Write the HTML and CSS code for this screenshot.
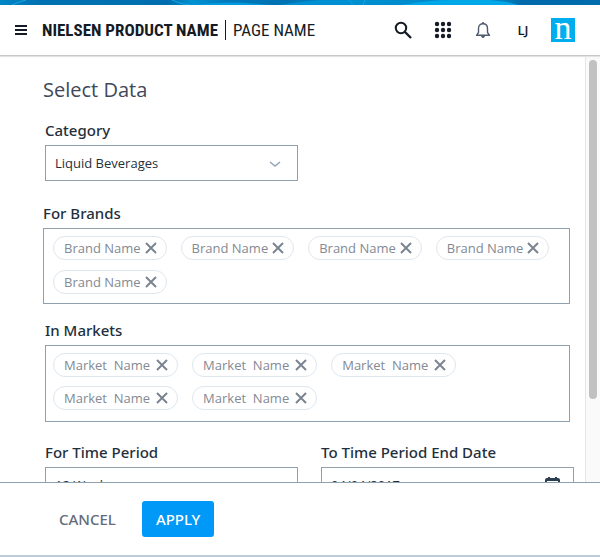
FILE: index.html
```html
<!DOCTYPE html>
<html lang="en">
<head>
<meta charset="utf-8">
<meta name="viewport" content="width=device-width, initial-scale=1">
<title>Nielsen Product Name | Page Name</title>
<link rel="stylesheet" href="styles.css">
</head>
<body>
<svg class="symbols" aria-hidden="true">
  <symbol id="close" viewBox="0 0 12 12"><path d="M1 1 11 11M11 1 1 11" fill="none" stroke="currentColor" stroke-width="2"/></symbol>
</svg>

<svg class="banner" viewBox="0 0 600 5" preserveAspectRatio="none" aria-hidden="true">
  <defs>
    <linearGradient id="wave">
      <stop offset="0" stop-color="#0087c6"/><stop offset=".06" stop-color="#0072b2"/>
      <stop offset=".28" stop-color="#006eae"/><stop offset=".32" stop-color="#0092d2"/>
      <stop offset=".38" stop-color="#0078ba"/><stop offset=".48" stop-color="#0072b2"/>
      <stop offset=".58" stop-color="#0090d0"/><stop offset=".68" stop-color="#008ccc"/>
      <stop offset=".84" stop-color="#0080c2"/><stop offset=".87" stop-color="#0069aa"/>
      <stop offset="1" stop-color="#006cac"/>
    </linearGradient>
  </defs>
  <path fill="url(#wave)" d="M0 0h600v5H0z"/>
  <path fill="#009bdc" d="M190 5Q230 0 268 5zM345 0h5l4 5h-3z"/>
  <path fill="#0090d2" d="M280 5Q310 0 330 0H348L352 5z"/>
  <path fill="#00a8e8" d="M402 5Q430 0 450 0H490Q510 2 518 5z"/>
  <path fill="none" stroke="#1aa5e0" d="M12 5Q18 2 26 0M172 0Q180 4 190 5M365 0 363 5"/>
</svg>

<header class="topbar">
  <button class="icon-button" type="button" aria-label="Menu">
    <svg width="12" height="12" viewBox="0 0 12 12"><path fill="#151b25" d="M0 1h12v2H0zM0 5h12v2H0zM0 9h12v2H0z"/></svg>
  </button>
  <h1 class="brand"><strong>NIELSEN PRODUCT NAME</strong><span class="divider"></span><span class="page">PAGE NAME</span></h1>
  <nav class="tools" aria-label="Tools">
    <button class="icon-button" type="button" aria-label="Search">
      <svg width="18" height="18" viewBox="0 0 18 18"><g fill="none" stroke="#151b25" stroke-width="2"><circle cx="7" cy="7" r="5.2"/><path d="m11 11 6 6" stroke-width="2.4"/></g></svg>
    </button>
    <button class="icon-button" type="button" aria-label="Apps">
      <svg width="18" height="18" viewBox="0 0 18 18"><g fill="#151b25"><circle cx="3" cy="3" r="2.2"/><circle cx="9" cy="3" r="2.2"/><circle cx="15" cy="3" r="2.2"/><circle cx="3" cy="9" r="2.2"/><circle cx="9" cy="9" r="2.2"/><circle cx="15" cy="9" r="2.2"/><circle cx="3" cy="15" r="2.2"/><circle cx="9" cy="15" r="2.2"/><circle cx="15" cy="15" r="2.2"/></g></svg>
    </button>
    <button class="icon-button" type="button" aria-label="Notifications">
      <svg width="16" height="18" viewBox="0 0 16 18"><path d="M1.5 14.3h13L12.5 11.5V7.5C12.5 4.5 10.5 2.7 8 2.7S3.5 4.5 3.5 7.5v4z" fill="none" stroke="#4f596c" stroke-width="1.4" stroke-linejoin="round"/><path d="M7.2 1h1.6v2H7.2zM6 15h4q-.5 2-2 2t-2-2z" fill="#4f596c"/></svg>
    </button>
    <button class="icon-button user" type="button">LJ</button>
    <a class="logo" href="#" aria-label="Nielsen">n</a>
  </nav>
</header>

<div class="viewport">
  <main class="panel">
    <h2 class="title">Select Data</h2>
    <div class="row category">
      <div class="field">
        <label class="label" for="category">Category</label>
        <div class="control">
          <select class="input" id="category"><option>Liquid Beverages</option></select>
          <svg class="chevron" width="12" height="6" viewBox="0 0 12 6"><path d="m1 1 5 4 5-4" fill="none" stroke="#94a5b5" stroke-width="1.5"/></svg>
        </div>
      </div>
    </div>
    <section class="brands" aria-labelledby="brands-label">
      <h3 class="label" id="brands-label">For Brands</h3>
      <ul class="chips">
        <li class="chip">Brand Name<button class="remove" type="button" aria-label="Remove"><svg width="12" height="12"><use href="#close"/></svg></button></li>
        <li class="chip">Brand Name<button class="remove" type="button" aria-label="Remove"><svg width="12" height="12"><use href="#close"/></svg></button></li>
        <li class="chip">Brand Name<button class="remove" type="button" aria-label="Remove"><svg width="12" height="12"><use href="#close"/></svg></button></li>
        <li class="chip">Brand Name<button class="remove" type="button" aria-label="Remove"><svg width="12" height="12"><use href="#close"/></svg></button></li>
        <li class="chip">Brand Name<button class="remove" type="button" aria-label="Remove"><svg width="12" height="12"><use href="#close"/></svg></button></li>
      </ul>
    </section>
    <section class="markets" aria-labelledby="markets-label">
      <h3 class="label" id="markets-label">In Markets</h3>
      <ul class="chips">
        <li class="chip">Market&nbsp; Name<button class="remove" type="button" aria-label="Remove"><svg width="12" height="12"><use href="#close"/></svg></button></li>
        <li class="chip">Market&nbsp; Name<button class="remove" type="button" aria-label="Remove"><svg width="12" height="12"><use href="#close"/></svg></button></li>
        <li class="chip">Market&nbsp; Name<button class="remove" type="button" aria-label="Remove"><svg width="12" height="12"><use href="#close"/></svg></button></li>
        <li class="chip">Market&nbsp; Name<button class="remove" type="button" aria-label="Remove"><svg width="12" height="12"><use href="#close"/></svg></button></li>
        <li class="chip">Market&nbsp; Name<button class="remove" type="button" aria-label="Remove"><svg width="12" height="12"><use href="#close"/></svg></button></li>
      </ul>
    </section>
    <div class="row">
      <div class="field">
        <label class="label" for="period">For Time Period</label>
        <div class="control">
          <select class="input" id="period"><option>12 Weeks</option></select>
          <svg class="chevron" width="12" height="6" viewBox="0 0 12 6"><path d="m1 1 5 4 5-4" fill="none" stroke="#94a5b5" stroke-width="1.5"/></svg>
        </div>
      </div>
      <div class="field">
        <label class="label" for="end">To Time Period End Date</label>
        <div class="control">
          <input class="input" id="end" type="text" value="04/04/2017">
          <svg class="calendar" width="15" height="16" viewBox="0 0 15 16"><path fill="#2c3e50" fill-rule="evenodd" d="M3 0h2v1h5V0h2v1h1q2 0 2 2v11q0 2-2 2H2q-2 0-2-2V3q0-2 2-2h1zM2 4v10h11V4z"/></svg>
        </div>
      </div>
    </div>
  </main>
  <div class="track" aria-hidden="true"><div class="thumb"></div></div>
</div>

<footer class="actions">
  <button class="button" type="button">CANCEL</button>
  <button class="button primary" type="button">APPLY</button>
</footer>
</body>
</html>
```
FILE: styles.css
```css
* { box-sizing: border-box; }

body {
  margin: 0;
  height: 100vh;
  display: flex;
  flex-direction: column;
  overflow: hidden;
  background: #fff;
  color: #1f303c;
  font-family: "Open Sans", "Noto Sans", sans-serif;
  font-size: 13px;
}

button { padding: 0; border: 0; background: none; font: inherit; color: inherit; cursor: pointer; }
svg { display: block; }
h1, h2, h3, ul { margin: 0; padding: 0; }
.symbols { display: none; }

.banner { width: 100%; height: 5px; flex: none; }

.topbar {
  flex: none;
  height: 51px;
  display: flex;
  align-items: center;
  padding: 0 25px 0 15px;
  border-bottom: 1px solid #c9c9c9;
  box-shadow: 0 1px 1px #e4e4e4;
  z-index: 1;
}
.brand {
  display: flex;
  align-items: center;
  margin-left: 15px;
  color: #151b25;
  font: 400 17px/24px "Roboto Condensed", "Liberation Sans Narrow", "Roboto", sans-serif;
  white-space: nowrap;
}
.divider { width: 1px; height: 20px; margin: 0 7px; background: #151b25; }
.tools { display: flex; align-items: center; margin-left: auto; }
.tools .icon-button { width: 40px; display: flex; justify-content: center; }
.user { color: #151b25; font-weight: 600; }
.logo {
  width: 24px;
  height: 24px;
  margin-left: 8px;
  background: #00aeef;
  color: #fff;
  font: 34px/20px "Liberation Serif", serif;
  text-align: center;
  text-decoration: none;
}

.viewport { flex: 1; min-height: 0; display: flex; }
.panel { flex: 1; overflow-y: auto; scrollbar-width: none; padding: 20px 11px 40px 43px; }
.track { width: 15px; padding: 4px 3px; border-left: 1px solid #e5e5e5; background: #fafafa; }
.thumb { height: 81%; width: 8px; border-radius: 4px; background: #c1c1c1; }

.title { margin-bottom: 16px; color: #404859; font-size: 20px; line-height: 28px; font-weight: 400; }
.label {
  display: block;
  margin-bottom: 5px;
  font: 500 15px/20px "Noto Sans", "Open Sans", sans-serif;
}
.row { display: grid; grid-template-columns: 1fr 1fr; gap: 23px; padding-left: 2px; }
.category { margin-bottom: 22px; }
.control { position: relative; }
.input {
  display: block;
  width: 100%;
  height: 36px;
  padding: 0 9px;
  border: 1px solid #8fa0ae;
  border-radius: 0;
  background: #fff;
  color: #1f303c;
  font: inherit;
  appearance: none;
}
.chevron { position: absolute; right: 17px; top: 16px; pointer-events: none; }
.calendar { position: absolute; right: 14px; top: 10px; pointer-events: none; }

.brands { margin: 0 4px 16px 0; }
.markets { margin: 0 4px 20px 2px; }
.chips { display: flex; flex-wrap: wrap; gap: 10px 14px; padding: 7px 9px 9px; border: 1px solid #8fa0ae; list-style: none; }
.markets .chips { padding: 7px 7px 11px; row-gap: 9px; }
.chip {
  display: flex;
  align-items: center;
  gap: 4px;
  height: 24px;
  padding: 0 9px 0 10px;
  border: 1px solid #dde7ef;
  border-radius: 12px;
  color: #838a94;
}
.markets .chip { gap: 6px; }
.remove { color: #7b8490; }

.actions {
  flex: none;
  height: 75px;
  display: flex;
  align-items: center;
  gap: 12px;
  padding: 0 45px;
  border-top: 1px solid #8fa0ae;
  border-bottom: 2px solid #bccbd8;
}
.button {
  height: 36px;
  padding: 0 14px;
  border-radius: 3px;
  color: #646b7b;
  font: 500 15px/20px "Noto Sans", "Open Sans", sans-serif;
}
.primary { background: #0099f7; color: #fff; }
```
